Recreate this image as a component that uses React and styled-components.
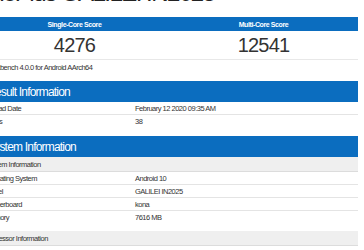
import React from "react";
import styled, { createGlobalStyle } from "styled-components";

const Global = createGlobalStyle`
  html, body { margin: 0; padding: 0; background: #fff; overflow: hidden; }
  body { font-family: "Liberation Sans", Arial, sans-serif; color: #333; }
`;

const Page = styled.div`
  margin-left: -20px;
  width: 378px;
  display: flex;
  flex-direction: column;
`;

const Heading = styled.h1`
  margin: -19px 0 0 -6px;
  font-size: 24px;
  line-height: 24px;
  font-weight: 400;
  letter-spacing: -1.5px;
  color: #222;
  white-space: nowrap;
`;

const ScoreTable = styled.div`
  margin-top: 12px;
  display: grid;
  grid-template-columns: 1fr 1fr;
`;

const ScoreHead = styled.div`
  background: #0b6dbf;
  color: #fff;
  font-size: 7px;
  font-weight: 700;
  letter-spacing: -0.4px;
  height: 14px;
  display: flex;
  align-items: center;
  justify-content: center;
`;

const ScoreValue = styled.div`
  height: 28px;
  border-bottom: 1px solid #e8e8e8;
  display: flex;
  align-items: center;
  justify-content: center;
  font-size: 20px;
  letter-spacing: -0.8px;
  color: #333;
`;

const Footnote = styled.div`
  padding: 3px 0 0 4px;
  height: 18px;
  font-size: 7.5px;
  letter-spacing: -0.5px;
  line-height: 10px;
  color: #333;
  box-sizing: border-box;
  white-space: nowrap;
`;

const Section = styled.section`
  margin-top: ${(p) => p.$gap}px;
  display: flex;
  flex-direction: column;
`;

const SectionTitle = styled.div`
  background: #0b6dbf;
  color: #fff;
  height: 21px;
  padding-left: 7px;
  display: flex;
  align-items: center;
  font-size: 12px;
  letter-spacing: -0.8px;
  font-weight: 400;
  white-space: nowrap;
`;

const SubHead = styled.div`
  background: #efefef;
  border-bottom: 1px solid #dcdcdc;
  height: 15px;
  padding-left: 5px;
  display: flex;
  align-items: center;
  font-size: 7.5px;
  letter-spacing: -0.5px;
  color: #333;
  box-sizing: border-box;
  white-space: nowrap;
`;

const Row = styled.div`
  display: grid;
  grid-template-columns: 155px 1fr;
  height: 13px;
  align-items: center;
  font-size: 7.5px;
  letter-spacing: -0.5px;
  color: #333;
  border-bottom: 1px solid ${(p) => (p.$last ? "transparent" : "#e4e4e4")};
  box-sizing: border-box;
`;

const Label = styled.span`
  padding-left: 5px;
  white-space: nowrap;
`;

const Value = styled.span`
  white-space: nowrap;
`;

export default function App() {
  return (
    <>
      <Global />
      <Page>
        <Heading>OnePlus GALILEI IN2025</Heading>
        <ScoreTable>
          <ScoreHead>Single-Core Score</ScoreHead>
          <ScoreHead>Multi-Core Score</ScoreHead>
          <ScoreValue>4276</ScoreValue>
          <ScoreValue>12541</ScoreValue>
        </ScoreTable>
        <Footnote>Geekbench 4.0.0 for Android AArch64</Footnote>

        <Section $gap={3}>
          <SectionTitle>Result Information</SectionTitle>
          <Row>
            <Label>Upload Date</Label>
            <Value>February 12 2020 09:35 AM</Value>
          </Row>
          <Row $last>
            <Label>Views</Label>
            <Value>38</Value>
          </Row>
        </Section>

        <Section $gap={8}>
          <SectionTitle>System Information</SectionTitle>
          <SubHead>System Information</SubHead>
          <Row>
            <Label>Operating System</Label>
            <Value>Android 10</Value>
          </Row>
          <Row>
            <Label>Model</Label>
            <Value>GALILEI IN2025</Value>
          </Row>
          <Row>
            <Label>Motherboard</Label>
            <Value>kona</Value>
          </Row>
          <Row $last>
            <Label>Memory</Label>
            <Value>7616 MB</Value>
          </Row>
          <Section $gap={7}>
            <SubHead>Processor Information</SubHead>
          </Section>
        </Section>
      </Page>
    </>
  );
}
